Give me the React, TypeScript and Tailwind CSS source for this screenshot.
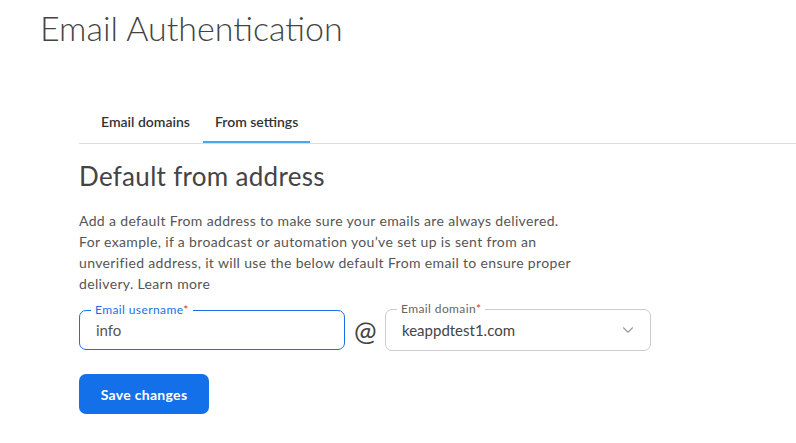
import { ChevronDown } from 'lucide-react'

function Tab({ label, active }: { label: string; active?: boolean }) {
  return (
    <div
      className={`px-[12px] pt-[10px] pb-[9px] border-b-2 text-[14px] leading-[20px] font-semibold text-[#333] ${
        active ? 'border-[#47a7f2]' : 'border-transparent'
      }`}
    >
      {label}
    </div>
  )
}

export default function App() {
  return (
    <div className="w-[796px] h-[443px] bg-white font-['Lato',sans-serif] overflow-hidden">
      <h1 className="h-[50px] pl-[40px] pt-[8px] text-[34px] leading-[1.2] font-light text-[#444]">
        Email Authentication
      </h1>

      <div className="mt-[52px] ml-[79px] pl-[10px] flex gap-[1px] border-b border-[#dddddd]">
        <Tab label="Email domains" />
        <Tab label="From settings" active />
      </div>

      <div className="pl-[79px]">
        <h2 className="mt-[17px] text-[26px] leading-[30px] tracking-[0.3px] font-normal text-[#444]">
          Default from address
        </h2>

        <p className="mt-[19px] whitespace-nowrap text-[14px] leading-[21px] tracking-[0.35px] text-[#555]">
          Add a default From address to make sure your emails are always delivered.
          <br />
          For example, if a broadcast or automation you’ve set up is sent from an
          <br />
          unverified address, it will use the below default From email to ensure proper
          <br />
          delivery. Learn more
        </p>

        <div className="mt-[15px] flex items-center">
          <div className="relative w-[266px] h-[40px] rounded-[7px] border border-[#1b6fe6] flex items-center px-[16px]">
            <span className="absolute -top-[8px] left-[11px] bg-white px-[4px] text-[12px] leading-[14px] tracking-[0.4px] text-[#1b6fe6]">
              Email username<span className="text-[#e0322f]">*</span>
            </span>
            <span className="text-[15px] text-[#555]">info</span>
          </div>

          <span className="mx-[9px] w-[22px] text-center text-[27px] leading-none text-[#444]">@</span>

          <div className="relative w-[266px] h-[42px] rounded-[7px] border border-[#cccccc] flex items-center justify-between pl-[16px] pr-[13px]">
            <span className="absolute -top-[8px] left-[11px] bg-white px-[4px] text-[12px] leading-[14px] tracking-[0.4px] text-[#666]">
              Email domain<span className="text-[#e0322f]">*</span>
            </span>
            <span className="text-[15px] text-[#444]">keappdtest1.com</span>
            <ChevronDown size={18} strokeWidth={1.5} className="text-[#999]" />
          </div>
        </div>

        <button className="mt-[23px] w-[130px] h-[40px] rounded-[7px] bg-[#1470e8] text-white text-[14px] tracking-[0.3px] font-bold">
          Save changes
        </button>
      </div>
    </div>
  )
}
